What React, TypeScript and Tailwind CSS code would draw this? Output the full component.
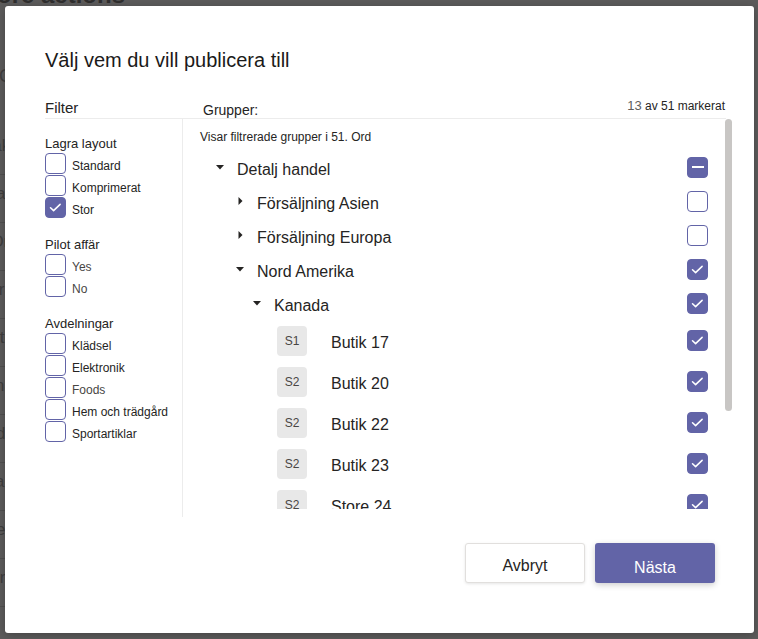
import React from 'react';
import clsx from 'clsx';

type BoxState = 'on' | 'off' | 'mixed';

const filterGroups: { title: string; items: { label: string; checked?: boolean; muted?: boolean }[] }[] = [
  {
    title: 'Lagra layout',
    items: [{ label: 'Standard' }, { label: 'Komprimerat' }, { label: 'Stor', checked: true }],
  },
  {
    title: 'Pilot affär',
    items: [{ label: 'Yes', muted: true }, { label: 'No', muted: true }],
  },
  {
    title: 'Avdelningar',
    items: [
      { label: 'Klädsel' },
      { label: 'Elektronik' },
      { label: 'Foods', muted: true },
      { label: 'Hem och trädgård' },
      { label: 'Sportartiklar' },
    ],
  },
];

const branches: { label: string; indent: string; open: boolean; state: BoxState }[] = [
  { label: 'Detalj handel', indent: 'pl-[31px]', open: true, state: 'mixed' },
  { label: 'Försäljning Asien', indent: 'pl-[51px]', open: false, state: 'off' },
  { label: 'Försäljning Europa', indent: 'pl-[51px]', open: false, state: 'off' },
  { label: 'Nord Amerika', indent: 'pl-[51px]', open: true, state: 'on' },
  { label: 'Kanada', indent: 'pl-[68px]', open: true, state: 'on' },
];

const stores = [
  { code: 'S1', name: 'Butik 17' },
  { code: 'S2', name: 'Butik 20' },
  { code: 'S2', name: 'Butik 22' },
  { code: 'S2', name: 'Butik 23' },
  { code: 'S2', name: 'Store 24' },
];

const backdropRows = ['Kontakt', 'Mall', 'Ort', 'Ort', 'Data', 'Mallsidorna', 'Sida', 'Publicerat', 'Artikel', 'Uppdatera'];
const backdropTail = ['l', 't', 't', 'a', 'e', 'a', 'c', 'e', 'c', 'c'];

const Box: React.FC<{ state: BoxState }> = ({ state }) => (
  <span
    className={clsx(
      'flex h-[21px] w-[21px] shrink-0 items-center justify-center rounded-[4px] border border-[#6264a7]',
      state === 'off' ? 'bg-white' : 'bg-[#6264a7]'
    )}
  >
    {state === 'on' && (
      <svg width="21" height="21" viewBox="0 0 21 21" fill="none">
        <path d="M5 10.8l3.4 3.2L15.6 7" stroke="white" strokeWidth="1.7" strokeLinecap="round" strokeLinejoin="round" />
      </svg>
    )}
    {state === 'mixed' && <span className="h-[2px] w-[12px] bg-white" />}
  </span>
);

const Caret: React.FC<{ open: boolean }> = ({ open }) => (
  <span className="flex h-[12px] w-[12px] shrink-0 items-center justify-center">
    {open ? (
      <svg width="8" height="5" viewBox="0 0 8 5">
        <path d="M0 0h8L4 4.5z" fill="#252423" />
      </svg>
    ) : (
      <svg width="5" height="8" viewBox="0 0 5 8">
        <path d="M0.5 0v8L4.5 4z" fill="#252423" />
      </svg>
    )}
  </span>
);

export default function App() {
  return (
    <div className="relative h-[639px] w-[758px] overflow-hidden bg-[#5c5b5b] font-['Liberation_Sans',Arial,sans-serif]">
      {/* page behind the dialog */}
      <div className="-ml-[23px] -mt-[21px] text-[24px] font-bold leading-[32px] text-[#2f2e2e]">More actions</div>
      <div className="mt-[50px] flex h-[30px] w-[12px] items-center justify-end overflow-hidden whitespace-nowrap text-[18px] text-[#3f3e3e]">
        Mer info C
      </div>
      <div className="mt-[36px] w-[14px]">
        {backdropRows.map((row, i) => (
          <div key={i} className="flex h-[48px] items-start justify-end overflow-hidden border-b border-[#4f4e4e] pt-[6px] whitespace-nowrap text-[17px] text-[#3f3e3e]">
            {row.slice(0, -1)}
            {backdropTail[i]}
          </div>
        ))}
      </div>

      {/* dialog */}
      <div className="absolute left-[5px] top-[6px] flex h-[627px] w-[749px] flex-col rounded-[3px] bg-white text-[#252423] shadow-[0_2px_8px_rgba(0,0,0,0.25)]">
        <h2 className="pl-[40px] pt-[40px] text-[20px] leading-[28px] text-[#1b1a19]">Välj vem du vill publicera till</h2>

        <div className="ml-[40px] flex">
          {/* filter column */}
          <div className="w-[138px]">
            <div className="flex h-[45px] items-end border-b border-[#ececec] pb-[1px] text-[15px] leading-[18px]">Filter</div>
            <div className="h-[398px] border-r border-[#ececec] pt-[15px]">
              {filterGroups.map((group, gi) => (
                <div key={group.title} className={clsx(gi > 0 && 'mt-[16px]')}>
                  <p className="mb-[1px] pt-[2px] text-[13px] leading-[16px]">{group.title}</p>
                  {group.items.map(item => (
                    <div key={item.label} className="flex h-[22px] items-start gap-[6px]">
                      <Box state={item.checked ? 'on' : 'off'} />
                      <span className={clsx('pt-[3px] text-[12px] leading-[21px]', item.muted ? 'text-[#484644]' : 'text-[#252423]')}>
                        {item.label}
                      </span>
                    </div>
                  ))}
                </div>
              ))}
            </div>
          </div>

          {/* groups column */}
          <div className="w-[550px]">
            <div className="flex h-[45px] w-[543px] items-end justify-between border-b border-[#ececec] pl-[20px] pr-[1px]">
              <span className="text-[14px] leading-[16px]">Grupper:</span>
              <span className="pb-[4px] text-[12px] leading-[16px]">
                <span className="text-[13px] text-[#605e5c]">13</span> av 51 markerat
              </span>
            </div>
            <div className="flex h-[390px] overflow-hidden">
              <div className="w-[542px] pt-[10px]">
                <p className="mb-[5px] pl-[17px] text-[12px] leading-[16px]">Visar filtrerade grupper i 51. Ord</p>
                {branches.map(b => (
                  <div key={b.label} className={clsx('flex h-[34px] items-center justify-between pr-[17px]', b.indent)}>
                    <div className="flex items-center gap-[11px]">
                      <Caret open={b.open} />
                      <span className="pt-[5px] text-[16px] leading-[20px]">{b.label}</span>
                    </div>
                    <Box state={b.state} />
                  </div>
                ))}
                {stores.map((s, i) => (
                  <div key={i} className="flex h-[41px] items-center justify-between pl-[94px] pr-[17px]">
                    <div className="flex items-center gap-[24px]">
                      <span className="flex h-[30px] w-[30px] items-center justify-center rounded-[4px] bg-[#e8e8e8] text-[12px] text-[#484644]">
                        {s.code}
                      </span>
                      <span className="pt-[5px] text-[16px] leading-[20px]">{s.name}</span>
                    </div>
                    <Box state="on" />
                  </div>
                ))}
              </div>
              <div className="w-[7px]">
                <div className="h-[292px] w-[7px] rounded-full bg-[#c8c6c4]" />
              </div>
            </div>
          </div>
        </div>

        <div className="mt-[26px] flex justify-end gap-[10px] pr-[39px]">
          <button className="h-[40px] w-[120px] rounded-[3px] border border-[#e1dfdd] bg-white pt-[5px] text-[16px] text-[#252423] shadow-[0_1px_3px_rgba(0,0,0,0.1)]">
            Avbryt
          </button>
          <button className="h-[40px] w-[120px] rounded-[3px] bg-[#6264a7] pt-[9px] text-[16px] text-white shadow-[0_2px_6px_rgba(0,0,0,0.2)]">
            Nästa
          </button>
        </div>
      </div>
    </div>
  );
}
